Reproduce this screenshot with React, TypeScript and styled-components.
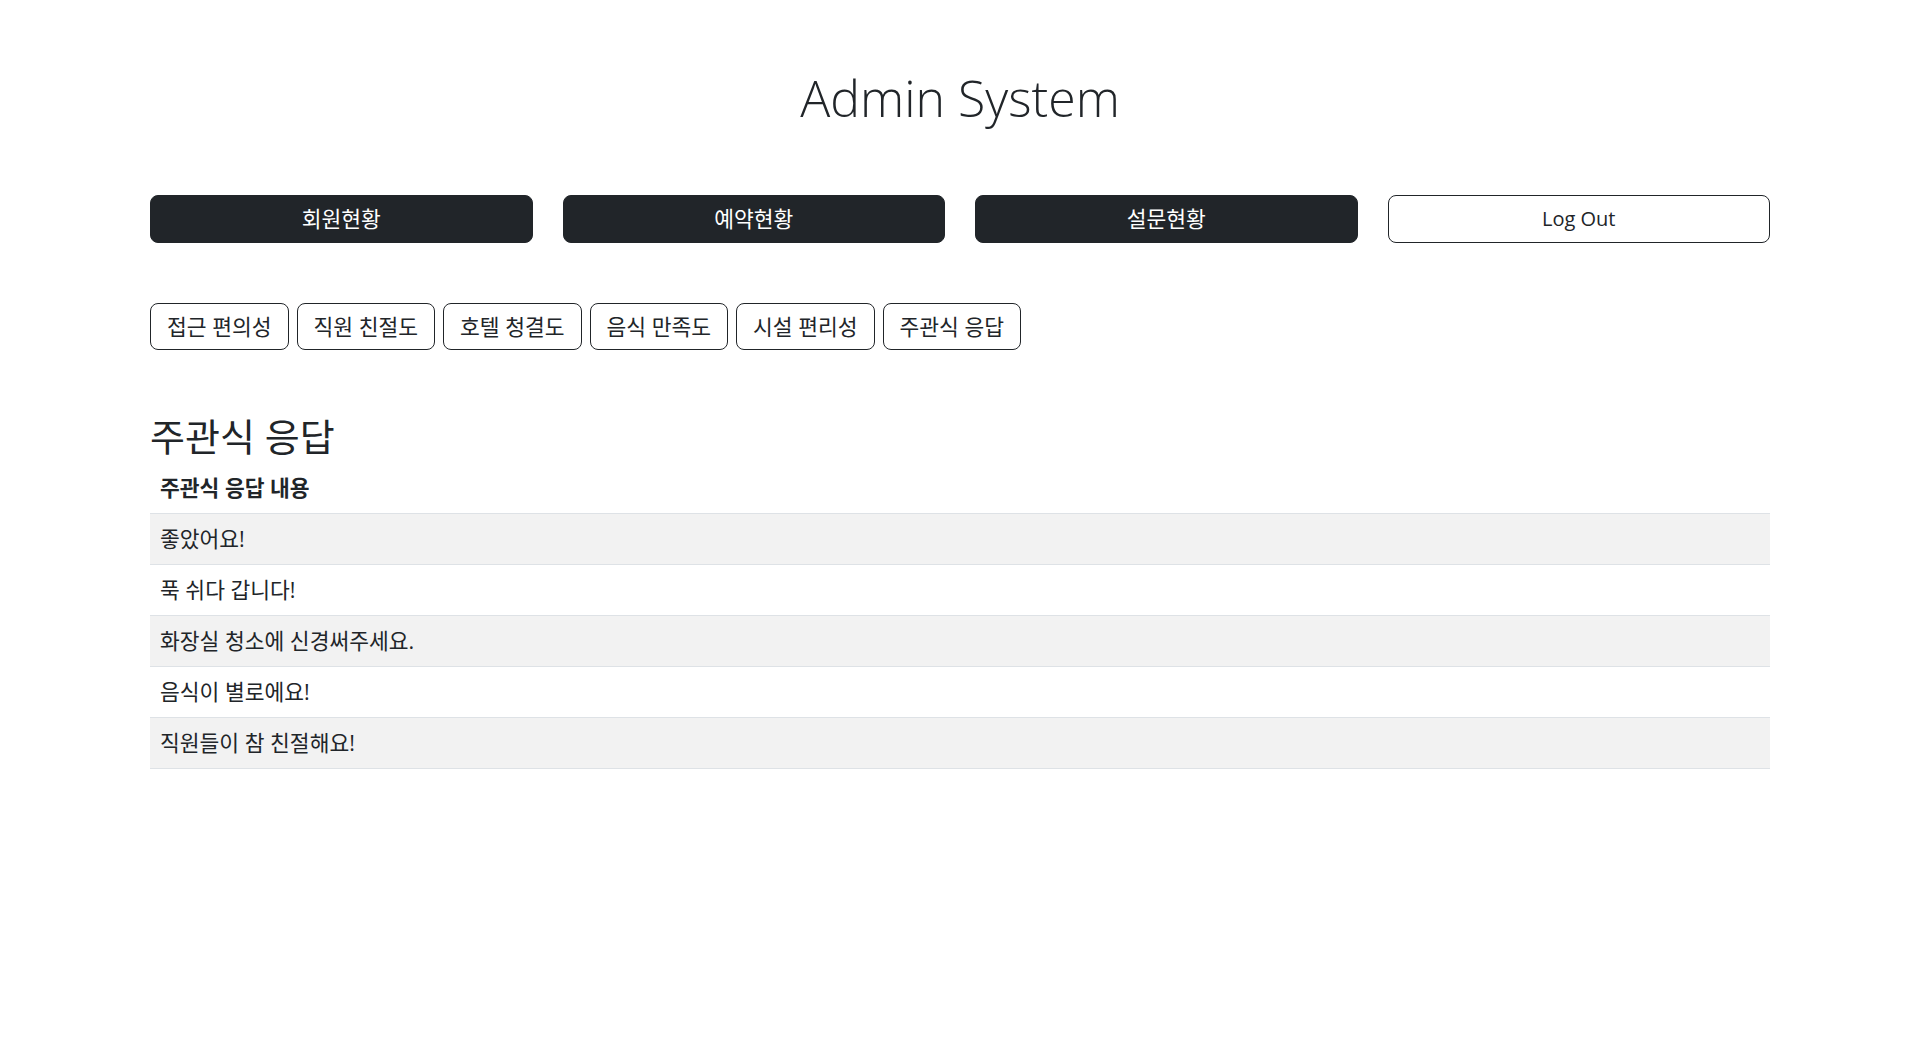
import React from "react"
import styled, { createGlobalStyle } from "styled-components"

const GlobalStyle = createGlobalStyle`
	* {
		box-sizing: border-box;
	}
	body {
		margin: 0;
		background: #fff;
		color: #212529;
		font-family: "Open Sans", "Noto Sans CJK KR", sans-serif;
	}
`

const Page = styled.div`
	padding: 69px 150px 0;
`

const Title = styled.h1`
	margin: 0 0 68px;
	text-align: center;
	font-size: 50px;
	font-weight: 300;
	line-height: 58px;
`

const MenuBar = styled.div`
	display: grid;
	grid-template-columns: repeat(4, 1fr);
	gap: 30px;
`

const MenuButton = styled.button<{ $outline?: boolean }>`
	height: 48px;
	padding: 8px 16px;
	border: 1px solid #212529;
	border-radius: 8px;
	background: ${(p) => (p.$outline ? "#fff" : "#212529")};
	color: ${(p) => (p.$outline ? "#212529" : "#fff")};
	font-family: inherit;
	font-size: ${(p) => (p.$outline ? "20px" : "21.5px")};
	line-height: 30px;
	cursor: pointer;
`

const TabBar = styled.div`
	display: flex;
	gap: 8px;
	margin-top: 60px;
`

const Tab = styled.button`
	height: 47px;
	padding: 7px 16px;
	border: 1px solid #212529;
	border-radius: 8px;
	background: #fff;
	color: #212529;
	font-family: inherit;
	font-size: 21.5px;
	line-height: 30px;
	cursor: pointer;
`

const SectionTitle = styled.h2`
	margin: 65px 0 6px;
	font-size: 38px;
	font-weight: 400;
	line-height: 42px;
`

const Table = styled.table`
	width: 100%;
	border-collapse: collapse;
	font-size: 21.5px;
	line-height: 30px;
`

const HeadCell = styled.th`
	padding: 10px;
	text-align: left;
	font-weight: 700;
	border-bottom: 1px solid #dee2e6;
`

const Row = styled.tr<{ $striped: boolean }>`
	background: ${(p) => (p.$striped ? "#f2f2f2" : "#fff")};
`

const Cell = styled.td`
	padding: 10px;
	border-bottom: 1px solid #dee2e6;
`

const tabs = ["접근 편의성", "직원 친절도", "호텔 청결도", "음식 만족도", "시설 편리성", "주관식 응답"]

const answers = [
	"좋았어요!",
	"푹 쉬다 갑니다!",
	"화장실 청소에 신경써주세요.",
	"음식이 별로에요!",
	"직원들이 참 친절해요!",
]

export default function App() {
	return (
		<>
			<GlobalStyle />
			<Page>
				<Title>Admin System</Title>
				<MenuBar>
					<MenuButton>회원현황</MenuButton>
					<MenuButton>예약현황</MenuButton>
					<MenuButton>설문현황</MenuButton>
					<MenuButton $outline>Log Out</MenuButton>
				</MenuBar>
				<TabBar>
					{tabs.map((t) => (
						<Tab key={t}>{t}</Tab>
					))}
				</TabBar>
				<SectionTitle>주관식 응답</SectionTitle>
				<Table>
					<thead>
						<tr>
							<HeadCell>주관식 응답 내용</HeadCell>
						</tr>
					</thead>
					<tbody>
						{answers.map((a, i) => (
							<Row key={a} $striped={i % 2 === 0}>
								<Cell>{a}</Cell>
							</Row>
						))}
					</tbody>
				</Table>
			</Page>
		</>
	)
}
